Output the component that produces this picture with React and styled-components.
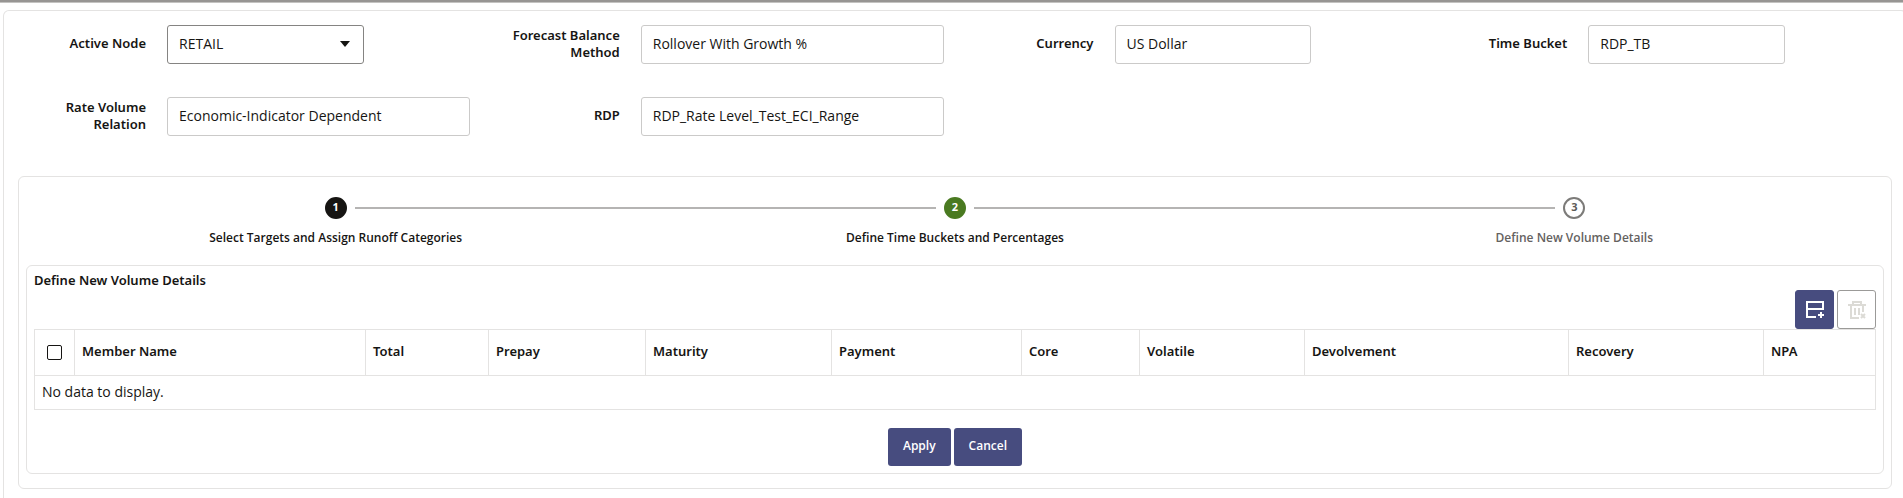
import React, { useState } from 'react';
import styled, { createGlobalStyle } from 'styled-components';

const GlobalStyle = createGlobalStyle`
  * {
    box-sizing: border-box;
  }
  body {
    margin: 0;
    background: #fff;
    color: #161513;
    font-family: 'Open Sans', 'Noto Sans', sans-serif;
    font-size: 14px;
    overflow-x: hidden;
  }
  button, input, select {
    font: inherit;
    color: inherit;
  }
`;

const TopStrip = styled.div`
  height: 2px;
  background: #979593;
  border-bottom: 1px solid #c4c3c1;
  box-sizing: content-box;
`;

const Page = styled.main`
  margin: 7px -4px 0 3px;
  min-height: calc(100vh - 10px);
  border: 1px solid #e4e3e2;
  border-bottom: none;
  border-radius: 6px 6px 0 0;
  padding: 14px 14px 6px;
`;

const Filters = styled.div`
  display: grid;
  grid-template-columns: repeat(4, 1fr);
  row-gap: 33px;
  margin: 0 -7px 0 -14px;
`;

const Field = styled.div`
  display: grid;
  grid-template-columns: 117px 1fr;
  column-gap: 21px;
  align-items: center;
  padding: 0 8px 0 25px;
`;

const FieldLabel = styled.label`
  padding-bottom: 2px;
  font-family: 'Noto Sans', sans-serif;
  font-size: 13px;
  font-weight: 600;
  line-height: 17px;
  text-align: right;
`;

const Control = styled.div`
  position: relative;
  width: ${({ $wide }) => ($wide ? '100%' : '65%')};
`;

const TextBox = styled.input`
  display: block;
  width: 100%;
  height: 39px;
  padding: 0 11px 3px;
  border: 1px solid #cbcac9;
  border-radius: 3px;
  background: #fff;
  outline: none;
`;

const Select = styled.select`
  display: block;
  width: 100%;
  height: 39px;
  padding: 0 32px 3px 11px;
  border: 1px solid #858482;
  border-radius: 3px;
  background: #fff;
  appearance: none;
  outline: none;
`;

const Caret = styled.svg`
  position: absolute;
  right: 14px;
  top: 16px;
  pointer-events: none;
`;

const Card = styled.section`
  border: 1px solid #e4e3e2;
  border-radius: 6px;
`;

const WizardCard = styled(Card)`
  margin: 40px 0 0;
  padding: 20px 7px 14px;
`;

const Stepper = styled.ol`
  display: flex;
  margin: 0;
  padding: 0;
  list-style: none;
`;

const Step = styled.li`
  flex: 1;
  text-align: center;
`;

const StepTrack = styled.div`
  display: flex;
  align-items: center;
  gap: 8px;
`;

const StepLine = styled.span`
  flex: 1;
  height: 2px;
  background: ${({ $hidden }) => ($hidden ? 'transparent' : '#b5b4b3')};
`;

const circleColors = {
  visited: { bg: '#161513', border: '#161513', text: '#fff' },
  current: { bg: '#4a7a21', border: '#4a7a21', text: '#fff' },
  upcoming: { bg: '#fff', border: '#7c7b79', text: '#5c5a57' },
};

const StepCircle = styled.button`
  width: 22px;
  height: 22px;
  padding: 0 0 2px;
  border: 2px solid ${({ $status }) => circleColors[$status].border};
  border-radius: 50%;
  background: ${({ $status }) => circleColors[$status].bg};
  color: ${({ $status }) => circleColors[$status].text};
  font-size: 11px;
  font-weight: 700;
  line-height: 16px;
`;

const StepLabel = styled.div`
  margin-top: 10px;
  font-size: 12px;
  font-weight: 600;
  line-height: 17px;
  color: ${({ $status }) => ($status === 'upcoming' ? '#65625f' : '#161513')};
`;

const DetailsCard = styled(Card)`
  margin-top: 19px;
  padding: 6px 7px 7px;
`;

const Title = styled.h2`
  margin: 0 0 1px;
  font-family: 'Noto Sans', sans-serif;
  font-size: 13px;
  font-weight: 600;
  line-height: 17px;
`;

const Toolbar = styled.div`
  display: flex;
  justify-content: flex-end;
  gap: 3px;
`;

const IconButton = styled.button`
  display: flex;
  align-items: center;
  justify-content: center;
  width: 39px;
  height: 39px;
  padding: 0;
  border: 1px solid #474c7f;
  border-radius: 3px;
  background: #474c7f;
  color: #fff;

  &:disabled {
    border-color: #9b9a98;
    background: #fff;
    color: #dcdbd6;
  }
`;

const Table = styled.table`
  width: 100%;
  border-collapse: collapse;
  table-layout: fixed;
  border: 1px solid #e4e3e2;
`;

const HeaderCell = styled.th`
  width: ${({ $width }) => $width}px;
  height: 46px;
  padding: 0 7px 3px;
  border: 1px solid #e4e3e2;
  font-family: 'Noto Sans', sans-serif;
  font-size: 13px;
  font-weight: 600;
  text-align: left;
`;

const CheckCell = styled(HeaderCell)`
  padding: 0;
`;

const EmptyCell = styled.td`
  height: 34px;
  padding: 0 7px 2px;
  border: 1px solid #e4e3e2;
`;

const Checkbox = styled.input`
  display: block;
  width: 15px;
  height: 15px;
  margin: 0 auto;
  border: 1px solid #161513;
  border-radius: 2px;
  background: #fff;
  appearance: none;

  &:checked {
    background: #161513;
  }
`;

const Actions = styled.div`
  display: flex;
  justify-content: center;
  gap: 3px;
  margin-top: 18px;
`;

const Button = styled.button`
  height: 38px;
  padding: 0 15px 3px;
  border: none;
  border-radius: 3px;
  background: #474c7f;
  color: #fff;
  font-size: 12px;
  font-weight: 600;
`;

const fields = [
  { id: 'activeNode', label: 'Active Node', value: 'RETAIL', type: 'select' },
  { id: 'method', label: 'Forecast Balance Method', value: 'Rollover With Growth %', wide: true },
  { id: 'currency', label: 'Currency', value: 'US Dollar' },
  { id: 'timeBucket', label: 'Time Bucket', value: 'RDP_TB' },
  { id: 'relation', label: 'Rate Volume Relation', value: 'Economic-Indicator Dependent', wide: true },
  { id: 'rdp', label: 'RDP', value: 'RDP_Rate Level_Test_ECI_Range', wide: true },
];

const steps = [
  { label: 'Select Targets and Assign Runoff Categories', status: 'visited' },
  { label: 'Define Time Buckets and Percentages', status: 'current' },
  { label: 'Define New Volume Details', status: 'upcoming' },
];

const columns = [
  { name: 'Member Name', width: 291 },
  { name: 'Total', width: 123 },
  { name: 'Prepay', width: 157 },
  { name: 'Maturity', width: 186 },
  { name: 'Payment', width: 190 },
  { name: 'Core', width: 118 },
  { name: 'Volatile', width: 165 },
  { name: 'Devolvement', width: 264 },
  { name: 'Recovery', width: 195 },
  { name: 'NPA', width: 112 },
];

const AddRowIcon = () => (
  <svg width="18" height="18" viewBox="0 0 18 18" fill="none" stroke="currentColor" strokeWidth="2">
    <path d="M10 16H1V1h16v8M1 8h16" />
    <path d="M15 11v6M12 14h6" />
  </svg>
);

const DeleteIcon = () => (
  <svg width="18" height="18" viewBox="0 0 18 18" fill="none" stroke="currentColor" strokeWidth="2">
    <path d="M0 4h18M5 4V1h8v3M3 4v13h8M15 4v7" />
    <path d="M7 7v7M11 7v7" />
    <path d="M13 13l4 4M17 13l-4 4" />
  </svg>
);

const FilterField = ({ field }) => (
  <Field>
    <FieldLabel htmlFor={field.id}>{field.label}</FieldLabel>
    <Control $wide={field.wide}>
      {field.type === 'select' ? (
        <>
          <Select id={field.id} defaultValue={field.value}>
            <option>{field.value}</option>
          </Select>
          <Caret width="10" height="6" viewBox="0 0 10 6">
            <path d="M0 0h10L5 6z" fill="#161513" />
          </Caret>
        </>
      ) : (
        <TextBox id={field.id} type="text" value={field.value} readOnly />
      )}
    </Control>
  </Field>
);

const App = () => {
  const [allSelected, setAllSelected] = useState(false);

  return (
    <>
      <GlobalStyle />
      <TopStrip />
      <Page>
        <Filters>
          {fields.map(field => (
            <FilterField key={field.id} field={field} />
          ))}
        </Filters>

        <WizardCard>
          <Stepper>
            {steps.map((step, i) => (
              <Step key={step.label}>
                <StepTrack>
                  <StepLine $hidden={i === 0} />
                  <StepCircle type="button" $status={step.status}>{i + 1}</StepCircle>
                  <StepLine $hidden={i === steps.length - 1} />
                </StepTrack>
                <StepLabel $status={step.status}>{step.label}</StepLabel>
              </Step>
            ))}
          </Stepper>

          <DetailsCard>
            <Title>Define New Volume Details</Title>
            <Toolbar>
              <IconButton type="button" aria-label="Add row">
                <AddRowIcon />
              </IconButton>
              <IconButton type="button" aria-label="Delete rows" disabled>
                <DeleteIcon />
              </IconButton>
            </Toolbar>
            <Table>
              <thead>
                <tr>
                  <CheckCell $width={40}>
                    <Checkbox
                      type="checkbox"
                      aria-label="Select all rows"
                      checked={allSelected}
                      onChange={e => setAllSelected(e.target.checked)}
                    />
                  </CheckCell>
                  {columns.map(col => (
                    <HeaderCell key={col.name} $width={col.width}>{col.name}</HeaderCell>
                  ))}
                </tr>
              </thead>
              <tbody>
                <tr>
                  <EmptyCell colSpan={columns.length + 1}>No data to display.</EmptyCell>
                </tr>
              </tbody>
            </Table>
            <Actions>
              <Button type="button">Apply</Button>
              <Button type="button">Cancel</Button>
            </Actions>
          </DetailsCard>
        </WizardCard>
      </Page>
    </>
  );
};

export default App;
